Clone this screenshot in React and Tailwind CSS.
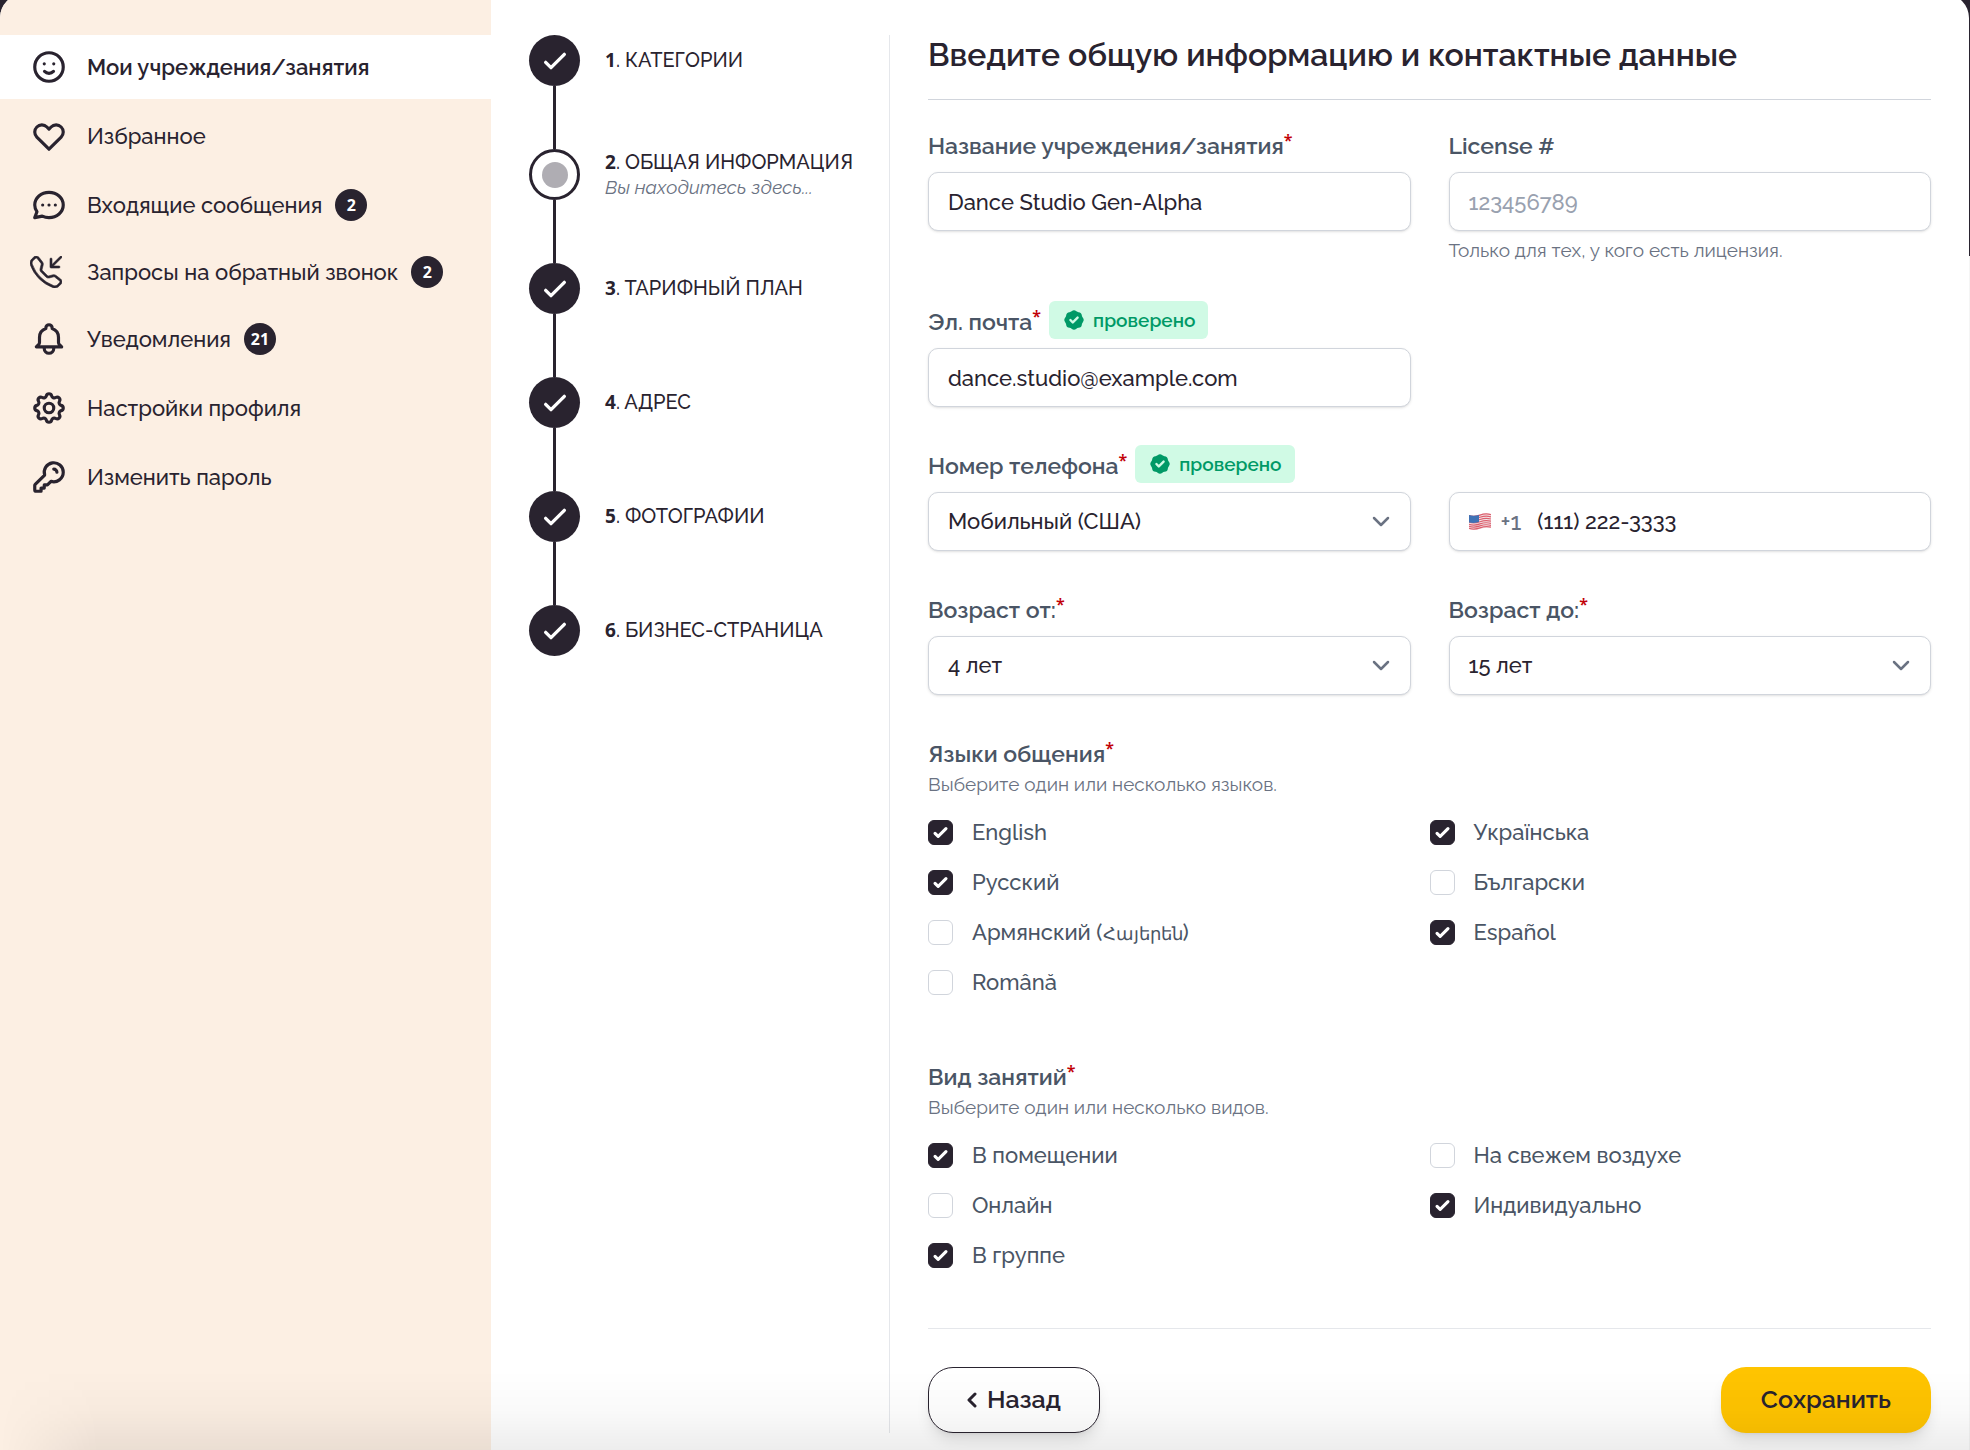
import React, { useState } from 'react';
import {
  HiOutlineEmojiHappy,
  HiOutlineHeart,
  HiOutlineChat,
  HiOutlineBell,
  HiOutlineCog,
  HiOutlineKey,
  HiOutlineCheck,
  HiOutlineChevronDown,
  HiBadgeCheck,
} from 'react-icons/hi';
import { BsTelephoneInbound } from 'react-icons/bs';

const menu = [
  { label: 'Мои учреждения/занятия', icon: HiOutlineEmojiHappy, active: true },
  { label: 'Избранное', icon: HiOutlineHeart },
  { label: 'Входящие сообщения', icon: HiOutlineChat, count: 2 },
  { label: 'Запросы на обратный звонок', icon: BsTelephoneInbound, count: 2, compact: true },
  { label: 'Уведомления', icon: HiOutlineBell, count: 21 },
  { label: 'Настройки профиля', icon: HiOutlineCog },
  { label: 'Изменить пароль', icon: HiOutlineKey },
];

const steps = [
  { title: 'КАТЕГОРИИ' },
  { title: 'ОБЩАЯ ИНФОРМАЦИЯ', current: true },
  { title: 'ТАРИФНЫЙ ПЛАН' },
  { title: 'АДРЕС' },
  { title: 'ФОТОГРАФИИ' },
  { title: 'БИЗНЕС-СТРАНИЦА' },
];

const languages = [
  { id: 'en', label: 'English', checked: true },
  { id: 'uk', label: 'Українська', checked: true },
  { id: 'ru', label: 'Русский', checked: true },
  { id: 'bg', label: 'Български' },
  {
    id: 'hy',
    label: (
      <span>
        Армянский (<span className="text-[18px]">Հայերեն</span>)
      </span>
    ),
  },
  { id: 'es', label: 'Español', checked: true },
  { id: 'ro', label: 'Română' },
];

const classTypes = [
  { id: 'indoor', label: 'В помещении', checked: true },
  { id: 'outdoor', label: 'На свежем воздухе' },
  { id: 'online', label: 'Онлайн' },
  { id: 'private', label: 'Индивидуально', checked: true },
  { id: 'group', label: 'В группе', checked: true },
];

const fieldClass =
  'h-[59px] w-full rounded-[10px] border border-gray-300 bg-white px-[19px] text-[22px] font-medium text-[#29232f] shadow-sm placeholder:text-gray-400 focus:border-[#29232f] focus:outline-none';

function Sidebar() {
  return (
    <aside className="w-[491px] shrink-0 bg-[#fcefe3] pt-[41px]">
      <nav className="flex flex-col gap-[5px]">
        {menu.map(({ label, icon: Icon, active, count, compact }) => (
          <a
            key={label}
            href="#"
            className={`flex items-center text-[22px] text-[#29232f] ${compact ? 'h-[60px]' : 'h-16'} ${
              active ? 'bg-white font-semibold' : 'font-medium'
            }`}
          >
            <span className="flex w-[87px] shrink-0 pl-[30px]">
              <Icon className={compact ? 'size-8 stroke-current stroke-[0.3]' : 'size-[38px]'} />
            </span>
            <span>{label}</span>
            {count && (
              <span className="ml-[13px] flex size-8 items-center justify-center rounded-full bg-[#29232f] font-['Noto_Sans',sans-serif] text-[16px] font-bold text-white">
                {count}
              </span>
            )}
          </a>
        ))}
      </nav>
    </aside>
  );
}

function Stepper() {
  return (
    <ol className="w-[399px] shrink-0 border-r border-gray-200 pl-[38px]">
      {steps.map((step, i) => (
        <li key={step.title} className="flex gap-[25px]">
          <div className="flex w-[51px] flex-col items-center">
            {step.current ? (
              <span className="flex size-[51px] items-center justify-center rounded-full border-[3px] border-[#29232f]">
                <span className="size-[26px] rounded-full bg-[#afadb3]" />
              </span>
            ) : (
              <span className="flex size-[51px] items-center justify-center rounded-full bg-[#29232f] text-white">
                <HiOutlineCheck className="size-8 [&_path]:stroke-[2.5]" />
              </span>
            )}
            {i < steps.length - 1 && <span className="h-[63px] w-[3px] bg-[#29232f]" />}
          </div>
          <div className="flex h-[51px] flex-col justify-center leading-[25px]">
            <p className="text-[20px] font-medium whitespace-nowrap text-[#29232f]">
              <span className="font-['Noto_Sans',sans-serif] text-[19px] font-bold">{i + 1}</span>. {step.title}
            </p>
            {step.current && <p className="text-[19px] text-gray-500 italic">Вы находитесь здесь...</p>}
          </div>
        </li>
      ))}
    </ol>
  );
}

function Star() {
  return (
    <span className="self-start font-['Noto_Sans',sans-serif] text-[16px] leading-[22px] font-semibold text-red-700">
      *
    </span>
  );
}

function Verified() {
  return (
    <span className="ml-2 flex h-[38px] items-center gap-[7px] rounded-md bg-emerald-100 px-[13px] text-[19px] font-semibold text-emerald-600">
      <HiBadgeCheck className="size-6" />
      проверено
    </span>
  );
}

function FieldLabel({ htmlFor, required, verified, children }) {
  return (
    <div className="flex h-[38px] items-end">
      <label htmlFor={htmlFor} className="flex text-[23px] leading-[34px] font-semibold text-gray-600">
        {children}
        {required && <Star />}
      </label>
      {verified && <Verified />}
    </div>
  );
}

function Select({ id, options }) {
  return (
    <div className="relative">
      <select id={id} className={`${fieldClass} appearance-none`}>
        {options.map((o) => (
          <option key={o}>{o}</option>
        ))}
      </select>
      <HiOutlineChevronDown className="pointer-events-none absolute top-[17px] right-[18px] size-6 text-gray-500 [&_path]:stroke-[2.5]" />
    </div>
  );
}

function Flag() {
  return (
    <svg viewBox="0 0 22 17" className="h-[17px] w-[22px]" aria-hidden="true">
      <path d="M0 2 Q5.500 3.500 11 1.500 T22 1 V14.500 Q16.500 14 11 16 T0 16Z" fill="#f3e9ec" />
      <g fill="none" stroke="#dd5f6d" strokeWidth="1.200">
        <path d="M0 2.600 Q5.500 4.100 11 2.100 T22 1.600" />
        <path d="M0 4.800 Q5.500 6.300 11 4.300 T22 3.800" />
        <path d="M0 7 Q5.500 8.500 11 6.500 T22 6" />
        <path d="M0 9.200 Q5.500 10.700 11 8.700 T22 8.200" />
        <path d="M0 11.400 Q5.500 12.900 11 10.900 T22 10.400" />
        <path d="M0 13.400 Q5.500 14.900 11 12.900 T22 12.400" />
        <path d="M0 15.400 Q5.500 16.900 11 14.900 T22 14.200" />
      </g>
      <path d="M0 2 Q5 3.500 10 1.900 V9 Q5 10.500 0 9.500Z" fill="#3f72b5" />
    </svg>
  );
}

function CheckboxGroup({ title, hint, items }) {
  const [checked, setChecked] = useState(items.filter((i) => i.checked).map((i) => i.id));
  const toggle = (id) =>
    setChecked(checked.includes(id) ? checked.filter((c) => c !== id) : [...checked, id]);

  return (
    <fieldset>
      <legend className="flex h-[38px] items-end text-[23px] leading-[34px] font-semibold text-gray-600">
        <span className="flex">
          {title}
          <Star />
        </span>
      </legend>
      <p className="text-[19px] leading-[26px] text-gray-500">{hint}</p>
      <div className="mt-5 grid grid-cols-2 gap-y-5">
        {items.map(({ id, label }) => (
          <label key={id} className="flex h-[30px] items-center gap-[19px] text-[22px] font-medium text-gray-600">
            <span className="relative flex">
              <input
                type="checkbox"
                checked={checked.includes(id)}
                onChange={() => toggle(id)}
                className="size-[25px] appearance-none rounded-md border border-gray-300 bg-white checked:border-[#29232f] checked:bg-[#29232f]"
              />
              {checked.includes(id) && (
                <svg viewBox="0 0 16 16" fill="white" className="pointer-events-none absolute inset-0 size-[25px]">
                  <path d="M12.207 4.793a1 1 0 010 1.414l-5 5a1 1 0 01-1.414 0l-2-2a1 1 0 011.414-1.414L6.500 9.086l4.293-4.293a1 1 0 011.414 0z" />
                </svg>
              )}
            </span>
            {label}
          </label>
        ))}
      </div>
    </fieldset>
  );
}

function InfoForm() {
  return (
    <form className="flex-1 px-[38px]" onSubmit={(e) => e.preventDefault()}>
      <h1 className="h-[65px] border-b border-gray-300 text-[32px] leading-[40px] font-[650] text-[#29232f]">
        Введите общую информацию и контактные данные
      </h1>

      <div className="mt-[25px] grid grid-cols-2 gap-[38px]">
        <div className="flex flex-col gap-[9px]">
          <FieldLabel htmlFor="name" required>Название учреждения/занятия</FieldLabel>
          <input id="name" type="text" defaultValue="Dance Studio Gen-Alpha" className={fieldClass} />
        </div>
        <div className="flex flex-col gap-[9px]">
          <FieldLabel htmlFor="license">License #</FieldLabel>
          <div>
            <input id="license" type="text" placeholder="123456789" className={fieldClass} />
            <p className="mt-[7px] text-[19px] leading-[25px] text-gray-500">Только для тех, у кого есть лицензия.</p>
          </div>
        </div>

        <div className="flex flex-col gap-[9px]">
          <FieldLabel htmlFor="email" required verified>Эл. почта</FieldLabel>
          <input id="email" type="email" defaultValue="dance.studio@example.com" className={fieldClass} />
        </div>
        <div />

        <div className="flex flex-col gap-[9px]">
          <FieldLabel htmlFor="phone-type" required verified>Номер телефона</FieldLabel>
          <Select id="phone-type" options={['Мобильный (США)', 'Городской (США)']} />
        </div>
        <div className="flex items-end">
          <div className="flex h-[59px] w-full items-center rounded-[10px] border border-gray-300 bg-white px-[19px] text-[22px] font-medium text-[#29232f] shadow-sm">
            <Flag />
            <span className="ml-2.5 text-[24px] text-gray-500">+1</span>
            <input
              type="tel"
              aria-label="Номер телефона"
              defaultValue="(111) 222-3333"
              className="ml-4 min-w-0 flex-1 bg-transparent focus:outline-none"
            />
          </div>
        </div>

        <div className="flex flex-col gap-[9px]">
          <FieldLabel htmlFor="age-from" required>Возраст от:</FieldLabel>
          <Select id="age-from" options={['4 лет', '5 лет', '6 лет']} />
        </div>
        <div className="flex flex-col gap-[9px]">
          <FieldLabel htmlFor="age-to" required>Возраст до:</FieldLabel>
          <Select id="age-to" options={['15 лет', '16 лет', '17 лет']} />
        </div>
      </div>

      <div className="mt-[38px] flex flex-col gap-[59px]">
        <CheckboxGroup title="Языки общения" hint="Выберите один или несколько языков." items={languages} />
        <CheckboxGroup title="Вид занятий" hint="Выберите один или несколько видов." items={classTypes} />
      </div>

      <div className="mt-[58px] flex justify-between border-t border-gray-200 pt-[38px]">
        <button
          type="button"
          className="flex h-[66px] items-center gap-2.5 rounded-[25px] border border-[#29232f] bg-white px-[38px] text-[25px] font-semibold text-[#29232f] shadow-lg"
        >
          <svg viewBox="0 0 10 16" className="h-4 w-[10px]" fill="none" stroke="currentColor" strokeWidth="3" strokeLinecap="round" strokeLinejoin="round">
            <path d="M8 2 2 8l6 6" />
          </svg>
          Назад
        </button>
        <button
          type="submit"
          className="h-[66px] rounded-[25px] bg-[#ffc400] px-10 text-[25px] font-semibold text-[#29232f] shadow-lg"
        >
          Сохранить
        </button>
      </div>
    </form>
  );
}

export default function App() {
  return (
    <div className="relative min-h-screen overflow-hidden bg-[linear-gradient(#29232f_256px,#f5f5f5_256px)] pr-px font-[Raleway,Lato,'Noto_Sans',sans-serif]">
      <div className="-mt-[6px] flex min-h-[calc(100vh+6px)] overflow-hidden rounded-t-3xl bg-white">
        <Sidebar />
        <main className="flex flex-1 pt-[41px] pb-[17px]">
          <Stepper />
          <InfoForm />
        </main>
      </div>
      <div className="pointer-events-none absolute inset-x-0 bottom-0 h-20 bg-linear-to-b from-transparent via-black/2 to-black/7 mask-l-from-95%" />
    </div>
  );
}
